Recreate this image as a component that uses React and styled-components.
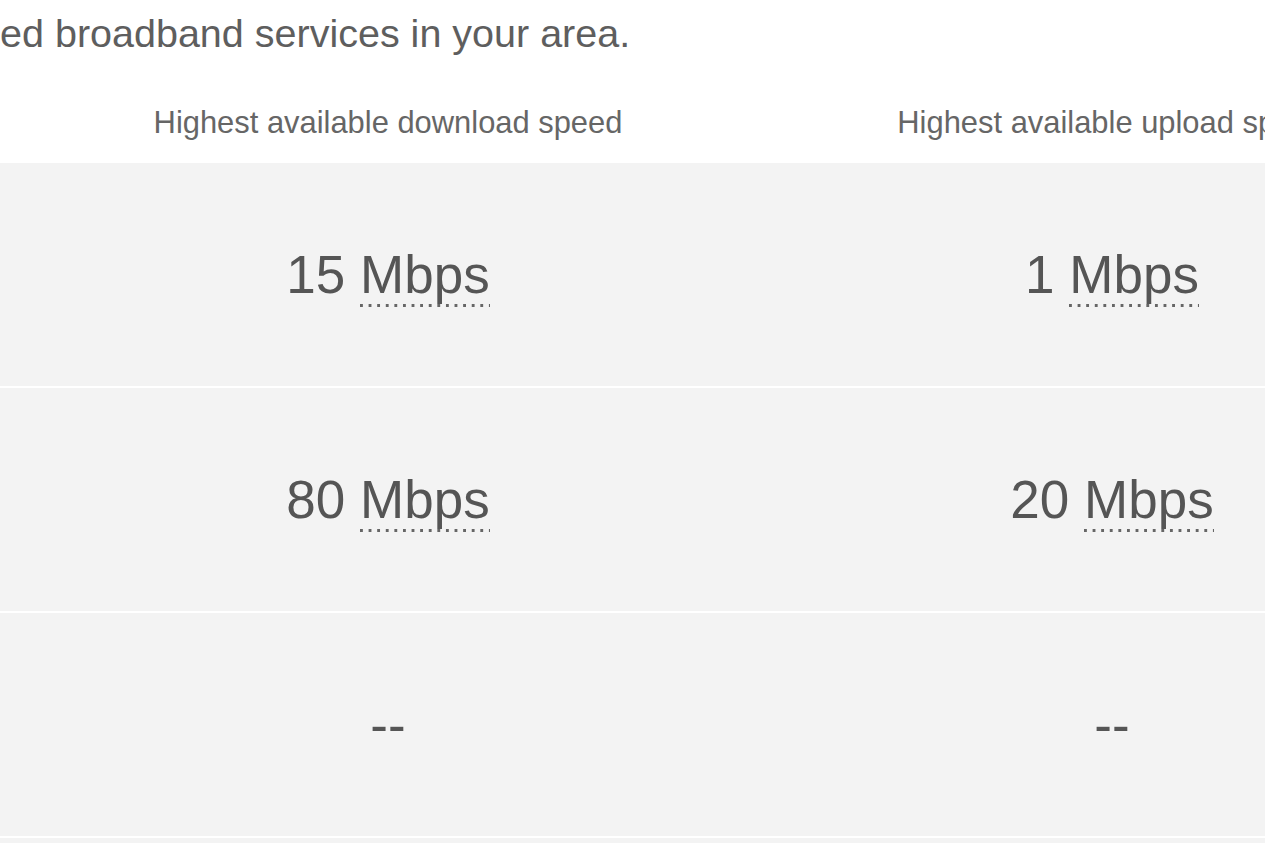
import React from "react";
import styled, { createGlobalStyle } from "styled-components";

const Global = createGlobalStyle`
  html, body {
    margin: 0;
    padding: 0;
    background: #ffffff;
    overflow: hidden;
  }
  body {
    font-family: "Liberation Sans", Arial, sans-serif;
  }
`;

const Page = styled.div`
  width: 1474px;
  padding-top: 9px;
`;

const Intro = styled.p`
  margin: 0;
  font-size: 39.5px;
  line-height: 48px;
  color: #5e5e5e;
  white-space: nowrap;
`;

const Grid = styled.div`
  display: grid;
  grid-template-columns: 26px 724px 724px;
`;

const HeaderRow = styled(Grid)`
  padding: 48px 0 22px;
  background: #ffffff;
`;

const HeaderCell = styled.div`
  text-align: center;
  font-size: 30.9px;
  line-height: 36px;
  color: #666666;
  white-space: nowrap;
`;

const Row = styled(Grid)`
  height: 223px;
  background: #f3f3f3;
  margin-bottom: 2px;
  align-items: center;
`;

const ValueCell = styled.div`
  text-align: center;
  font-size: 53px;
  line-height: 61px;
  color: #555555;
  white-space: nowrap;
`;

const Unit = styled.abbr`
  text-decoration: none;
  padding-bottom: 3px;
  background-image: linear-gradient(to right, #666666 3px, transparent 3px);
  background-size: 8.6px 3px;
  background-repeat: repeat-x;
  background-position: left bottom;
`;

const rows = [
  { down: "15", up: "1" },
  { down: "80", up: "20" },
  { down: null, up: null },
  { empty: true },
];

function Speed({ value }) {
  if (value == null) return <ValueCell>--</ValueCell>;
  return (
    <ValueCell>
      {value} <Unit title="Megabits per second">Mbps</Unit>
    </ValueCell>
  );
}

export default function App() {
  return (
    <>
      <Global />
      <Page>
        <Intro>ed broadband services in your area.</Intro>
        <HeaderRow>
          <div />
          <HeaderCell>Highest available download speed</HeaderCell>
          <HeaderCell>Highest available upload speed</HeaderCell>
        </HeaderRow>
        {rows.map((r, i) => (
          <Row key={i}>
            <div />
            {r.empty ? (
              <>
                <div />
                <div />
              </>
            ) : (
              <>
                <Speed value={r.down} />
                <Speed value={r.up} />
              </>
            )}
          </Row>
        ))}
      </Page>
    </>
  );
}
